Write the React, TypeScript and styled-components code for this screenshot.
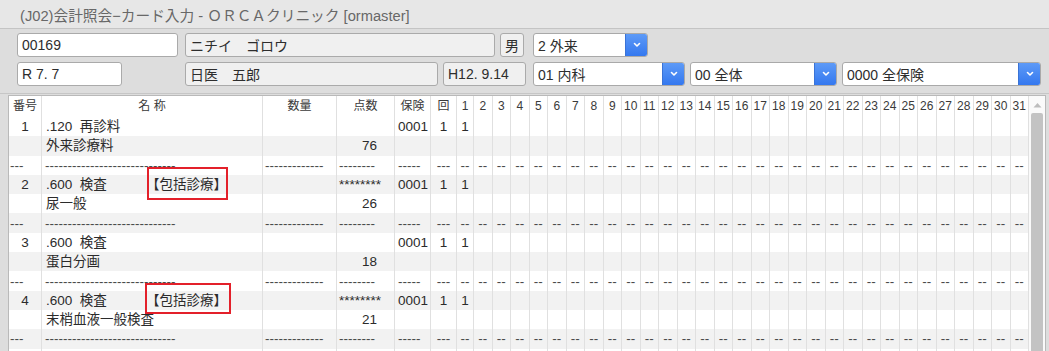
import React from "react";
import styled, { createGlobalStyle } from "styled-components";

const GlobalStyle = createGlobalStyle`
  body {
    margin: 0;
    background: #dddddd;
    font-family: "Liberation Sans", "Noto Sans CJK JP", sans-serif;
    color: #2d2d2d;
  }
`;

const COLS = "33px 221px 74px 58px 36px 26px 17px repeat(30, 18.5px)";
const DAYS = Array.from({ length: 31 }, (_, i) => String(i + 1));

type Line = {
  kind: "item" | "sep" | "blank";
  no?: string;
  name?: string;
  tag?: boolean;
  pts?: string;
  ins?: string;
  kai?: string;
  d1?: string;
};

const LINES: Line[] = [
  { kind: "item", no: "1", name: ".120  再診料", ins: "0001", kai: "1", d1: "1" },
  { kind: "item", name: "外来診療料", pts: "76" },
  { kind: "sep" },
  { kind: "item", no: "2", name: ".600  検査", tag: true, pts: "********", ins: "0001", kai: "1", d1: "1" },
  { kind: "item", name: "尿一般", pts: "26" },
  { kind: "sep" },
  { kind: "item", no: "3", name: ".600  検査", ins: "0001", kai: "1", d1: "1" },
  { kind: "item", name: "蛋白分画", pts: "18" },
  { kind: "sep" },
  { kind: "item", no: "4", name: ".600  検査", tag: true, pts: "********", ins: "0001", kai: "1", d1: "1" },
  { kind: "item", name: "末梢血液一般検査", pts: "21" },
  { kind: "sep" },
  { kind: "blank" },
];

// red annotation boxes drawn over the table (coordinates inside the frame)
const MARKS = [
  { left: 138, top: 71, width: 81, height: 33 },
  { left: 136, top: 187, width: 86, height: 31 },
];

const Page = styled.div`
  display: flex;
  flex-direction: column;
  height: 351px;
  overflow: hidden;
`;

const TitleBar = styled.div`
  height: 28px;
  flex-shrink: 0;
  display: flex;
  align-items: center;
  padding-left: 20px;
  background: #e7e7e7;
  border-bottom: 1px solid #c4c4c4;
  font-size: 14.7px;
  color: #686868;
  white-space: pre;
`;

const Form = styled.div`
  display: flex;
  flex-direction: column;
  flex-shrink: 0;
  gap: 5px;
  padding: 4px 0 7px 17px;
  border-bottom: 1px solid #c6c6c6;
`;

const FormRow = styled.div`
  display: flex;
  height: 24px;
`;

const Field = styled.div<{ $w: number; $ml?: number; $ro?: boolean; $center?: boolean }>`
  box-sizing: border-box;
  width: ${({ $w }) => $w}px;
  margin-left: ${({ $ml }) => $ml ?? 0}px;
  display: flex;
  align-items: center;
  justify-content: ${({ $center }) => ($center ? "center" : "flex-start")};
  padding: 0 ${({ $center }) => ($center ? 0 : 4)}px;
  background: ${({ $ro }) => ($ro ? "#f0f0f0" : "#ffffff")};
  border: 1px solid #aaaaaa;
  border-radius: 3px;
  font-size: 14px;
  white-space: pre;
`;

const SelectBox = styled.div<{ $w: number; $ml?: number }>`
  box-sizing: border-box;
  width: ${({ $w }) => $w}px;
  margin-left: ${({ $ml }) => $ml ?? 0}px;
  display: flex;
  background: #ffffff;
  border: 1px solid #a9a9a9;
  border-radius: 3px;
  font-size: 14px;
  overflow: hidden;
`;

const SelectText = styled.div`
  flex: 1;
  display: flex;
  align-items: center;
  padding-left: 4px;
  white-space: pre;
`;

const SelectButton = styled.div`
  width: 21px;
  display: flex;
  align-items: center;
  justify-content: center;
  background: linear-gradient(#5d9af7, #3478ef);
  border-left: 1px solid #3a73d6;
`;

const TableFrame = styled.div`
  position: relative;
  margin: 1px 0 0 8px;
  width: 1038px;
  box-sizing: border-box;
  display: flex;
  border: 1px solid #b9b9b9;
  border-bottom: none;
  background: #ffffff;
  flex: 1;
  overflow: hidden;
`;

const Grid = styled.div`
  display: flex;
  flex-direction: column;
  width: 1020px;
`;

const Row = styled.div<{ $alt?: boolean; $head?: boolean }>`
  display: grid;
  grid-template-columns: ${COLS};
  height: ${({ $head }) => ($head ? "21px" : "19.3px")};
  flex-shrink: 0;
  background: ${({ $alt }) => ($alt ? "#f2f2f2" : "#ffffff")};
  font-size: ${({ $head }) => ($head ? "12px" : "13.5px")};
  color: ${({ $head }) => ($head ? "#3a3a3a" : "#2b2b2b")};
`;

const Cell = styled.div<{ $align?: "left" | "center" | "right"; $pl?: number; $pr?: number }>`
  display: flex;
  align-items: center;
  justify-content: ${({ $align }) =>
    $align === "right" ? "flex-end" : $align === "left" ? "flex-start" : "center"};
  padding-left: ${({ $pl }) => $pl ?? 0}px;
  padding-right: ${({ $pr }) => $pr ?? 0}px;
  border-right: 1px solid #e0e0e0;
  white-space: pre;
  line-height: 19px;
  min-width: 0;
`;

const Dash = styled.span`
  color: #4a4a4a;
`;

const Code = styled.span`
  display: inline-block;
  min-width: 100px;
`;

const Mark = styled.div`
  position: absolute;
  box-sizing: border-box;
  border: 2px solid #e3202a;
  z-index: 5;
  pointer-events: none;
`;

const ScrollTrack = styled.div`
  width: 16px;
  display: flex;
  flex-direction: column;
  align-items: center;
  background: #fafafa;
`;

const ArrowUp = styled.div`
  height: 17px;
  display: flex;
  align-items: center;
  justify-content: center;
`;

const Thumb = styled.div`
  width: 12px;
  flex: 1;
  background: #c3c3c3;
  border-radius: 2px 2px 0 0;
`;

const Chevron = () => (
  <svg width="10" height="10" viewBox="0 0 10 10">
    <polyline points="2.5,3.5 5,6 7.5,3.5" fill="none" stroke="#ffffff" strokeWidth="1.6" strokeLinecap="round" strokeLinejoin="round" />
  </svg>
);

const Select = ({ text, w, ml }: { text: string; w: number; ml?: number }) => (
  <SelectBox $w={w} $ml={ml}>
    <SelectText>{text}</SelectText>
    <SelectButton>
      <Chevron />
    </SelectButton>
  </SelectBox>
);

const HeaderRow = () => (
  <Row $head>
    <Cell>番号</Cell>
    <Cell>名 称</Cell>
    <Cell>数量</Cell>
    <Cell>点数</Cell>
    <Cell>保険</Cell>
    <Cell>回</Cell>
    {DAYS.map((d) => (
      <Cell key={d}>{d}</Cell>
    ))}
  </Row>
);

const SepRow = ({ alt }: { alt: boolean }) => (
  <Row $alt={alt}>
    <Cell $align="left" $pl={1}><Dash>---</Dash></Cell>
    <Cell $align="left" $pl={3}><Dash>-----------------------------</Dash></Cell>
    <Cell $align="left" $pl={2}><Dash>-------------</Dash></Cell>
    <Cell $align="left" $pl={2}><Dash>--------</Dash></Cell>
    <Cell $align="left" $pl={3}><Dash>-----</Dash></Cell>
    <Cell><Dash>---</Dash></Cell>
    {DAYS.map((d) => (
      <Cell key={d}><Dash>--</Dash></Cell>
    ))}
  </Row>
);

const ItemRow = ({ line, alt }: { line: Line; alt: boolean }) => {
  const stars = line.pts && line.pts.startsWith("*");
  return (
    <Row $alt={alt}>
      <Cell>{line.no}</Cell>
      <Cell $align="left" $pl={4}>
        <Code>{line.name}</Code>
        {line.tag && <span>【包括診療】</span>}
      </Cell>
      <Cell />
      {stars ? (
        <Cell $align="left" $pl={2}>{line.pts}</Cell>
      ) : (
        <Cell $align="right" $pr={17}>{line.pts}</Cell>
      )}
      <Cell $align="left" $pl={3}>{line.ins}</Cell>
      <Cell>{line.kai}</Cell>
      {DAYS.map((d) => (
        <Cell key={d}>{d === "1" ? line.d1 : ""}</Cell>
      ))}
    </Row>
  );
};

export default function App() {
  return (
    <Page>
      <GlobalStyle />
      <TitleBar>(J02)会計照会−カード入力 - ＯＲＣＡクリニック [ormaster]</TitleBar>
      <Form>
        <FormRow>
          <Field $w={161}>00169</Field>
          <Field $w={310} $ml={7} $ro>ニチイ　ゴロウ</Field>
          <Field $w={24} $ml={5} $ro $center>男</Field>
          <Select text="2 外来" w={115} ml={9} />
        </FormRow>
        <FormRow>
          <Field $w={105}>R 7. 7</Field>
          <Field $w={253} $ml={63} $ro>日医　五郎</Field>
          <Field $w={83} $ml={5} $ro>H12. 9.14</Field>
          <Select text="01 内科" w={152} ml={7} />
          <Select text="00 全体" w={147} ml={5} />
          <Select text="0000 全保険" w={199} ml={5} />
        </FormRow>
      </Form>
      <TableFrame>
        <Grid>
          <HeaderRow />
          {LINES.map((line, i) => {
            const alt = i % 2 === 1;
            if (line.kind === "sep") return <SepRow key={i} alt={alt} />;
            return <ItemRow key={i} line={line} alt={alt} />;
          })}
        </Grid>
        <ScrollTrack>
          <ArrowUp>
            <svg width="9" height="6" viewBox="0 0 9 6">
              <polygon points="0.5,5.5 4.5,1 8.5,5.5" fill="#bdbdbd" />
            </svg>
          </ArrowUp>
          <Thumb />
        </ScrollTrack>
        {MARKS.map((m, i) => (
          <Mark key={i} style={{ left: m.left, top: m.top, width: m.width, height: m.height }} />
        ))}
      </TableFrame>
    </Page>
  );
}
